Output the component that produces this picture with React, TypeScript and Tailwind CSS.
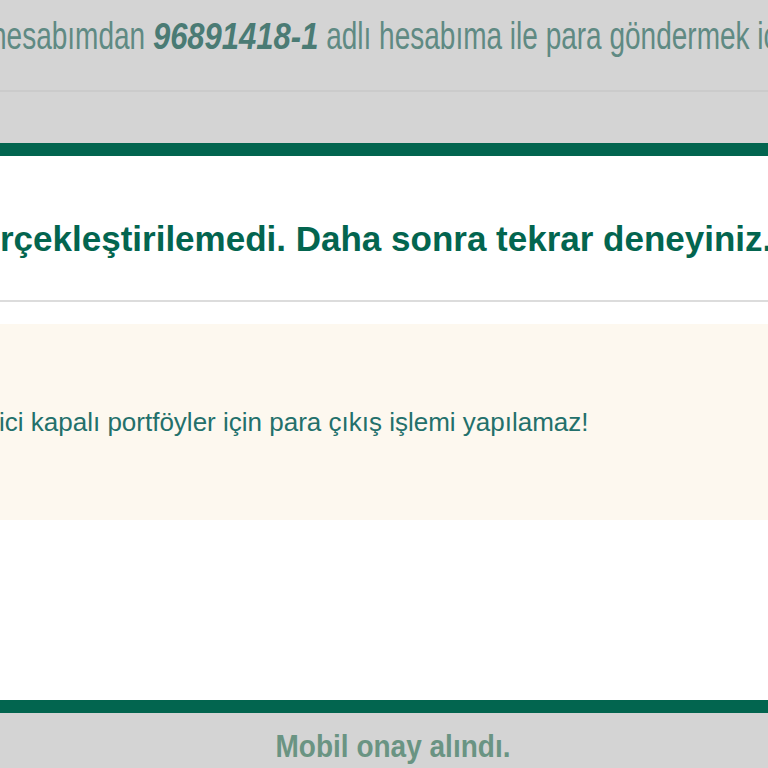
export default function App() {
  return (
    <div className="w-[768px] h-[768px] overflow-hidden flex flex-col bg-white font-['Liberation_Sans',Arial,sans-serif]">
      {/* Top summary */}
      <div className="h-[90px] bg-[#d4d4d4] flex items-center pb-[21px] overflow-hidden">
        <p className="whitespace-nowrap -ml-[9px] text-[28px] text-[#5f8a83] leading-none scale-y-140 origin-center">
          hesabımdan{' '}
          <b className="inline-block italic text-[31px] text-[#4a7b74] leading-none scale-y-85 origin-[50%_85%]">
            96891418-1
          </b>{' '}
          adlı hesabıma ile para göndermek için
        </p>
      </div>
      <div className="h-[2px] bg-[#cbcbcb]" />
      <div className="h-[51px] bg-[#d4d4d4]" />

      {/* Error card */}
      <div className="h-[13px] bg-[#02654f]" />
      <div className="h-[144px] flex items-end pb-[44px] overflow-hidden">
        <h2 className="whitespace-nowrap text-[35px] font-bold text-[#03654f] leading-none">
          rçekleştirilemedi. Daha sonra tekrar deneyiniz.
        </h2>
      </div>
      <div className="h-[2px] bg-[#dcdcdc]" />
      <div className="h-[22px]" />
      <div className="h-[196px] bg-[#fdf8ef] flex items-center overflow-hidden">
        <p className="whitespace-nowrap -ml-[1px] text-[26px] text-[#23706b] leading-none">
          ici kapalı portföyler için para çıkış işlemi yapılamaz!
        </p>
      </div>
      <div className="flex-1" />
      <div className="h-[13px] bg-[#02654f]" />

      {/* Bottom status */}
      <div className="h-[55px] bg-[#d4d4d4] flex justify-center items-end pb-[6px]">
        <p className="ml-[18px] text-[28px] font-bold text-[#6a9483] leading-none scale-y-110 origin-[50%_85%]">
          Mobil onay alındı.
        </p>
      </div>
    </div>
  );
}
